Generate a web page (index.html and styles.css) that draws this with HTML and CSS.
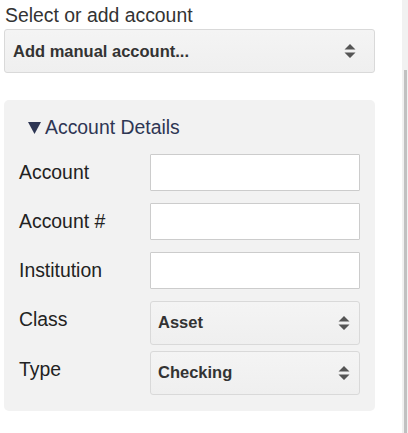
FILE: index.html
```html
<!DOCTYPE html>
<html>
<head>
<meta charset="utf-8">
<link rel="stylesheet" href="styles.css">
</head>
<body>
<div class="page">
  <label class="top-label">Select or add account</label>
  <div class="select wide">
    <span class="select-text">Add manual account...</span>
    <svg class="arrows" width="12" height="14" viewBox="0 0 12 14"><path d="M6 0 L11.5 5.5 H0.5 Z M6 14 L11.5 8.5 H0.5 Z" fill="#555"/></svg>
  </div>
  <div class="panel">
    <div class="summary"><svg class="tri" width="13" height="12" viewBox="0 0 13 12"><path d="M0 0 H13 L6.5 12 Z" fill="#2e3654"/></svg>Account Details</div>
    <div class="rows">
      <div class="row input-row"><span class="lbl">Account</span><div class="input"></div></div>
      <div class="row input-row"><span class="lbl">Account #</span><div class="input"></div></div>
      <div class="row input-row"><span class="lbl">Institution</span><div class="input"></div></div>
      <div class="row select-row"><span class="lbl">Class</span>
        <div class="select field"><span class="select-text">Asset</span>
          <svg class="arrows" width="12" height="14" viewBox="0 0 12 14"><path d="M6 0 L11.5 5.5 H0.5 Z M6 14 L11.5 8.5 H0.5 Z" fill="#555"/></svg>
        </div>
      </div>
      <div class="row select-row"><span class="lbl">Type</span>
        <div class="select field"><span class="select-text">Checking</span>
          <svg class="arrows" width="12" height="14" viewBox="0 0 12 14"><path d="M6 0 L11.5 5.5 H0.5 Z M6 14 L11.5 8.5 H0.5 Z" fill="#555"/></svg>
        </div>
      </div>
    </div>
  </div>
</div>
<div class="scrollbar"><div class="thumb"></div></div>
</body>
</html>
```
FILE: styles.css
```css
html, body {
  margin: 0;
  padding: 0;
  background: #fff;
  overflow: hidden;
}
body {
  font-family: "Liberation Sans", Arial, sans-serif;
  color: #333;
  width: 408px;
  height: 433px;
  position: relative;
}
.page {
  width: 371px;
  padding: 3px 0 0 4px;
  display: flex;
  flex-direction: column;
}
.top-label {
  font-size: 19.4px;
  line-height: 24px;
  padding-left: 1px;
  color: #333;
  height: 26px;
}
.select {
  box-sizing: border-box;
  background: linear-gradient(#f4f4f4, #efefef);
  border: 1px solid #d9d9d9;
  border-radius: 3px;
  display: flex;
  align-items: center;
  justify-content: space-between;
  height: 44px;
  padding: 0 18px 0 8px;
}
.select-text {
  font-weight: bold;
  font-size: 16.5px;
  color: #333;
}
.select.field {
  height: 43.5px;
  padding-left: 7px;
  padding-right: 9px;
}
.panel {
  margin-top: 27px;
  background: #f2f2f2;
  border-radius: 5px;
  padding: 14px 15px 16px 15px;
}
.summary {
  font-size: 19.4px;
  line-height: 24px;
  color: #2e3654;
  padding-left: 9px;
  display: flex;
  align-items: center;
  height: 26px;
}
.tri {
  margin-right: 4px;
  margin-top: 1px;
}
.rows {
  margin-top: 14px;
  display: flex;
  flex-direction: column;
}
.row {
  display: grid;
  grid-template-columns: 131px 210px;
}
.lbl {
  font-size: 19.4px;
  line-height: 24px;
  color: #222;
}
.input-row {
  margin-bottom: 12.5px;
}
.input-row .lbl {
  padding-top: 6px;
}
.input {
  box-sizing: border-box;
  height: 36.5px;
  background: #fff;
  border: 1px solid #ccc;
  border-radius: 1px;
}
.select-row {
  margin-bottom: 6.5px;
}
.select-row:last-child {
  margin-bottom: 0;
}
.select-row .lbl {
  padding-top: 6px;
}
.scrollbar {
  position: absolute;
  top: 0;
  right: 0;
  width: 6px;
  height: 433px;
  background: #f1f1f1;
}
.thumb {
  position: absolute;
  top: 70px;
  left: 2px;
  width: 3px;
  bottom: 0;
  background: #c1c1c1;
}
```
